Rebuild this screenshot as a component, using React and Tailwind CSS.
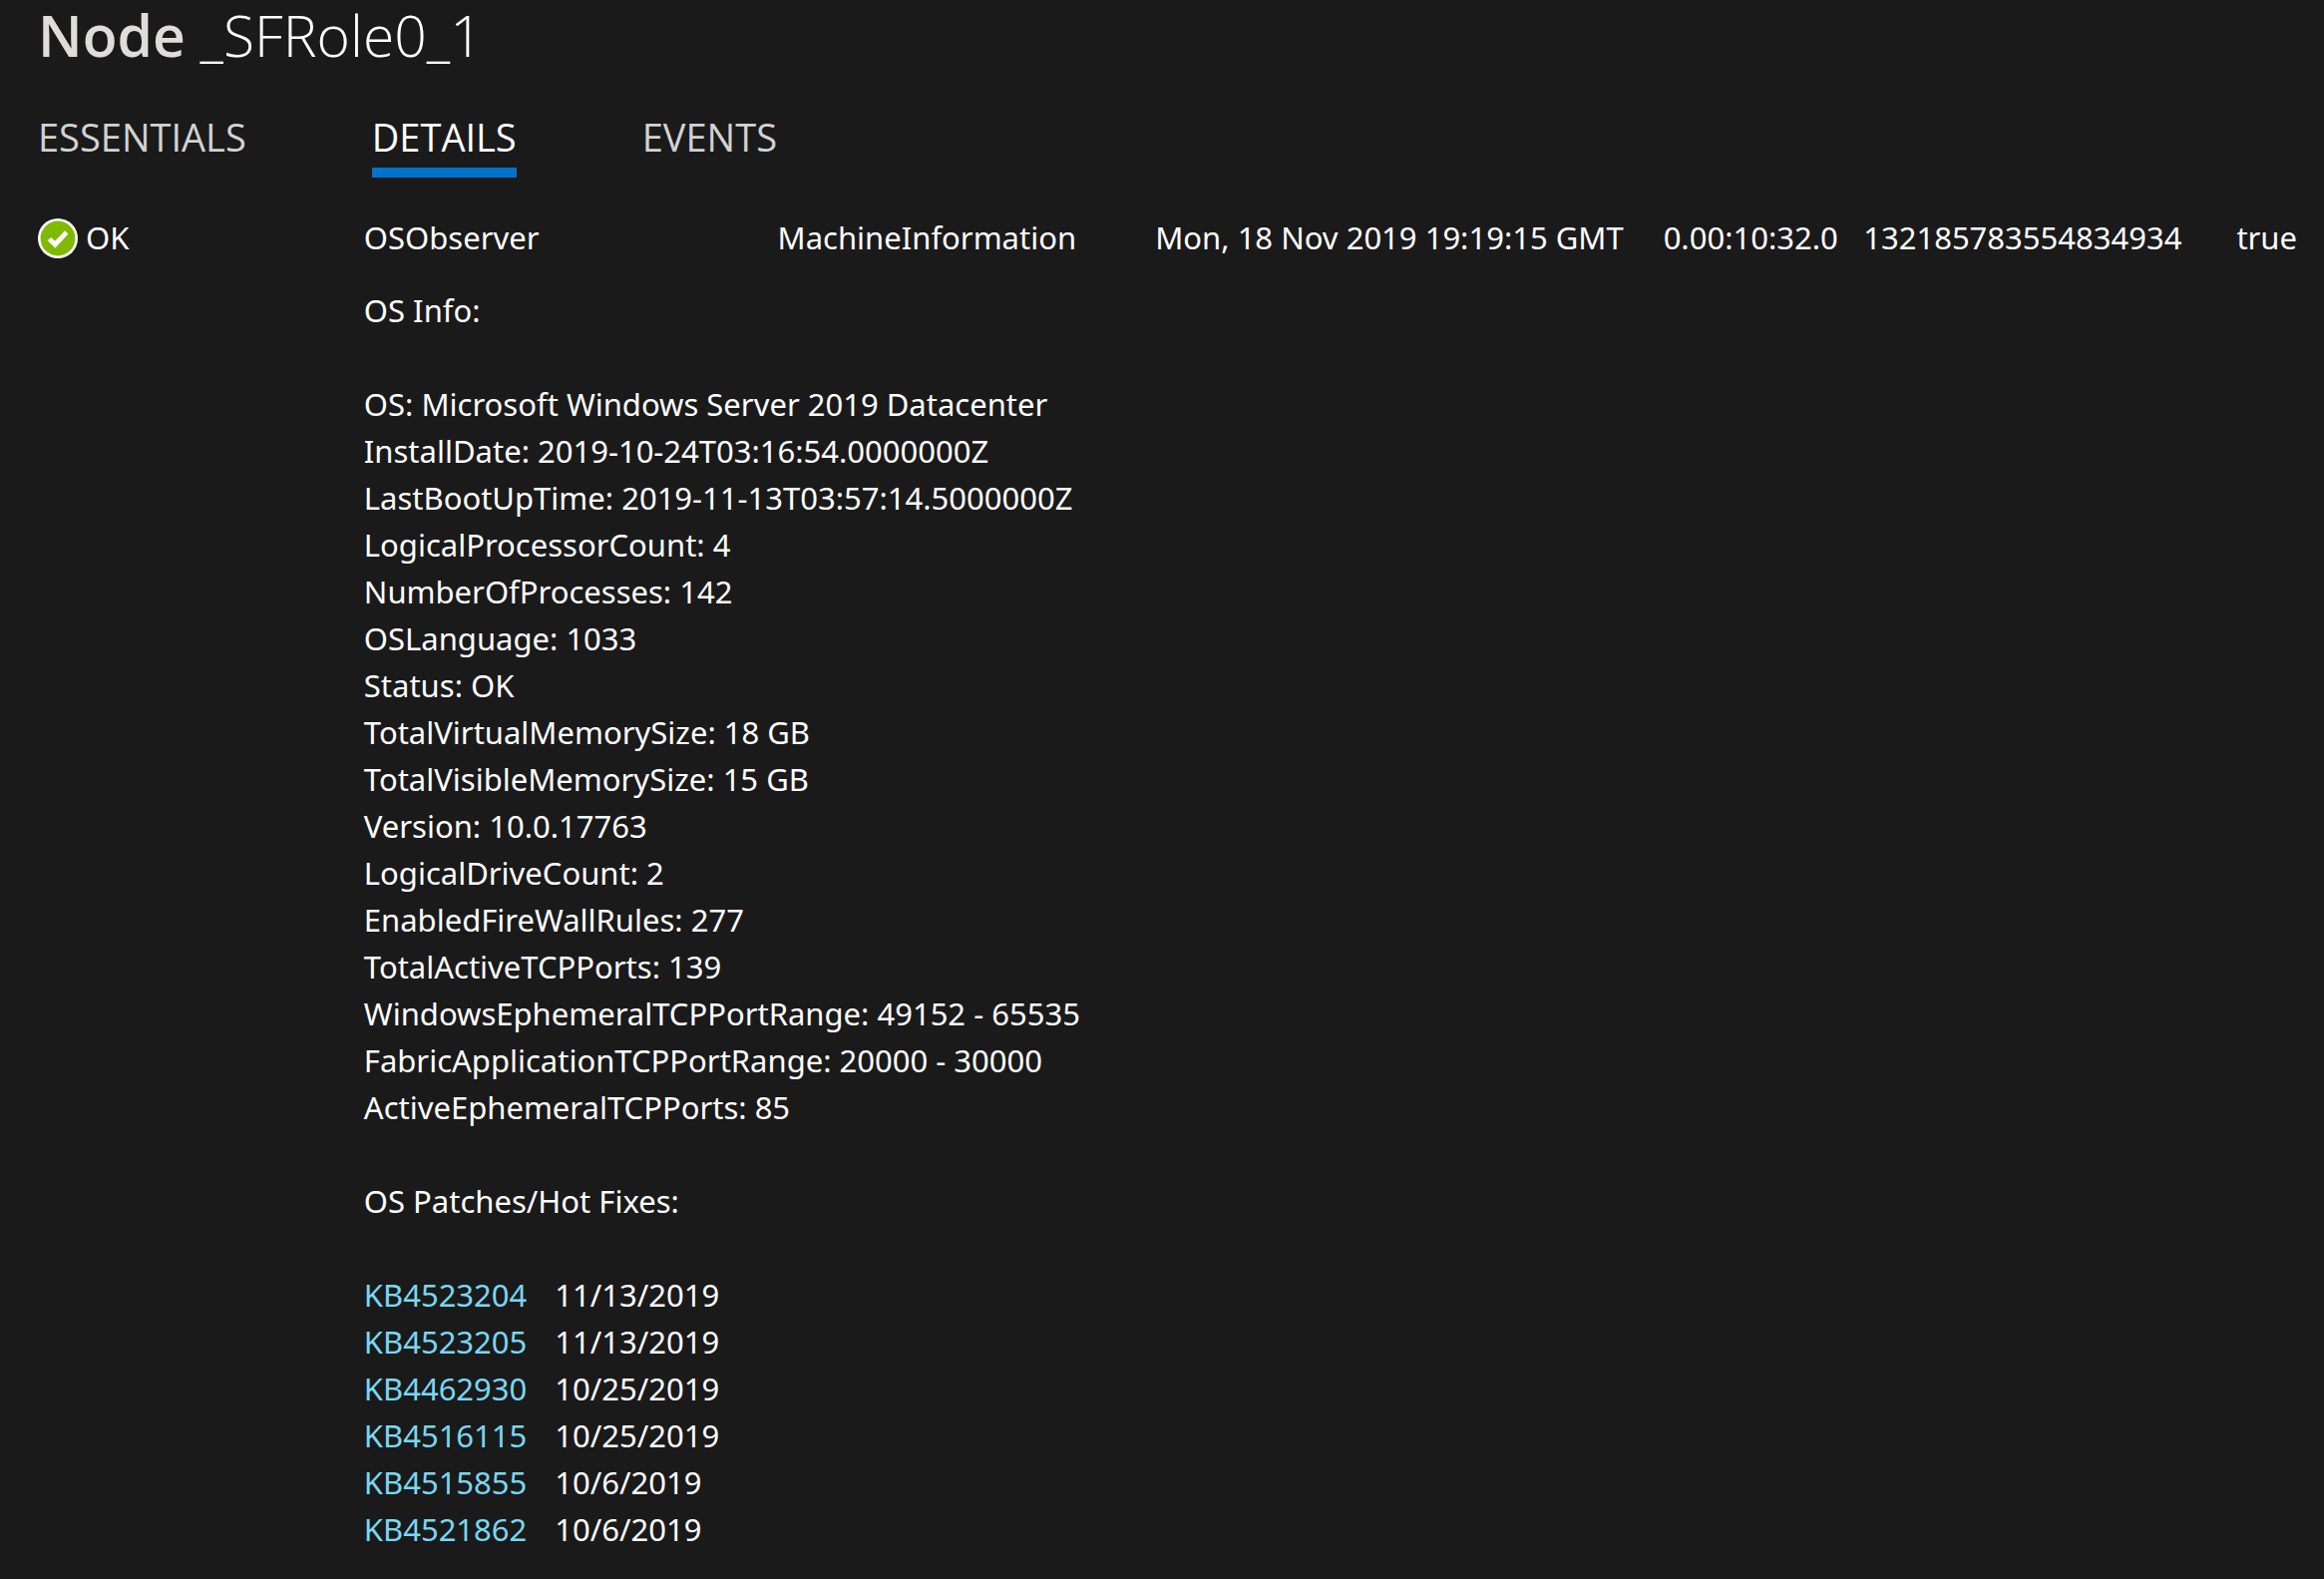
import React from 'react';

const TABS = ['ESSENTIALS', 'DETAILS', 'EVENTS'];

const OS_INFO = [
  ['OS', 'Microsoft Windows Server 2019 Datacenter'],
  ['InstallDate', '2019-10-24T03:16:54.0000000Z'],
  ['LastBootUpTime', '2019-11-13T03:57:14.5000000Z'],
  ['LogicalProcessorCount', '4'],
  ['NumberOfProcesses', '142'],
  ['OSLanguage', '1033'],
  ['Status', 'OK'],
  ['TotalVirtualMemorySize', '18 GB'],
  ['TotalVisibleMemorySize', '15 GB'],
  ['Version', '10.0.17763'],
  ['LogicalDriveCount', '2'],
  ['EnabledFireWallRules', '277'],
  ['TotalActiveTCPPorts', '139'],
  ['WindowsEphemeralTCPPortRange', '49152 - 65535'],
  ['FabricApplicationTCPPortRange', '20000 - 30000'],
  ['ActiveEphemeralTCPPorts', '85'],
];

const PATCHES = [
  ['KB4523204', '11/13/2019'],
  ['KB4523205', '11/13/2019'],
  ['KB4462930', '10/25/2019'],
  ['KB4516115', '10/25/2019'],
  ['KB4515855', '10/6/2019'],
  ['KB4521862', '10/6/2019'],
];

function OkIcon() {
  return (
    <svg className="size-10 shrink-0" viewBox="0 0 40 40" aria-hidden="true">
      <circle cx="20" cy="20" r="20" fill="#fff" />
      <circle cx="20" cy="20" r="17.4" fill="#7fba00" />
      <path d="M9.7 22.1 13.2 18.9 17.2 22.6 27 12.2 30.4 15.5 17.3 29.7Z" fill="#fff" />
    </svg>
  );
}

export default function App() {
  return (
    <main className="min-h-screen bg-[#1a1a1a] px-[38px] font-['Open_Sans','Noto_Sans',sans-serif] text-white">
      <h1 className="text-[57px] leading-[70px] font-light">
        <span className="font-semibold text-[#e0dcdc]">Node</span> _SFRole0_1
      </h1>

      <nav className="mt-[40px] flex gap-[126px]" role="tablist">
        {TABS.map((tab) => (
          <button
            key={tab}
            type="button"
            role="tab"
            aria-selected={tab === 'DETAILS'}
            className={
              tab === 'DETAILS'
                ? 'border-b-10 border-[#0074cc] pb-1 text-[38px] leading-[54px]'
                : 'border-b-10 border-transparent pb-1 text-[38px] leading-[54px] text-[#d2d2d2]'
            }
          >
            {tab}
          </button>
        ))}
      </nav>

      <table className="mt-[37px] w-full table-fixed text-left font-['Noto_Sans','Open_Sans',sans-serif] text-[31px] leading-[47px] whitespace-nowrap">
        <colgroup>
          <col className="w-[14.5%]" />
          <col className="w-[18.4%]" />
          <col className="w-[16.8%]" />
          <col className="w-[22.6%]" />
          <col className="w-[8.9%]" />
          <col className="w-[16.6%]" />
          <col />
        </colgroup>
        <tbody>
          <tr>
            <td>
              <span className="flex items-center gap-2">
                <OkIcon />
                OK
              </span>
            </td>
            <td>OSObserver</td>
            <td>MachineInformation</td>
            <td>Mon, 18 Nov 2019 19:19:15 GMT</td>
            <td>0.00:10:32.0</td>
            <td>132185783554834934</td>
            <td>true</td>
          </tr>
          <tr>
            <td />
            <td colSpan={6} className="pt-[26px]">
              <h2>OS Info:</h2>
              <ul className="mt-[47px]">
                {OS_INFO.map(([name, value]) => (
                  <li key={name}>
                    {name}: {value}
                  </li>
                ))}
              </ul>
              <h2 className="mt-[47px]">OS Patches/Hot Fixes:</h2>
              <ul className="mt-[47px]">
                {PATCHES.map(([id, date]) => (
                  <li key={id} className="flex gap-7">
                    <a href={`#${id}`} className="text-[#79d7f2]">
                      {id}
                    </a>
                    <span>{date}</span>
                  </li>
                ))}
              </ul>
            </td>
          </tr>
        </tbody>
      </table>
    </main>
  );
}
